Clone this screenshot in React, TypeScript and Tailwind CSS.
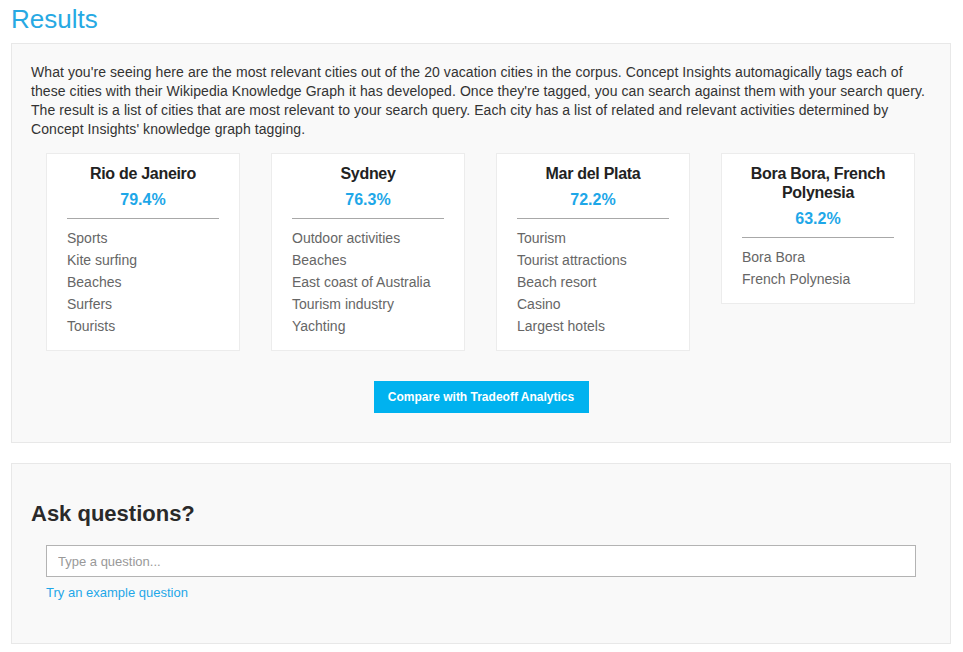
const cities = [
  { name: "Rio de Janeiro", score: "79.4%", tags: ["Sports", "Kite surfing", "Beaches", "Surfers", "Tourists"] },
  { name: "Sydney", score: "76.3%", tags: ["Outdoor activities", "Beaches", "East coast of Australia", "Tourism industry", "Yachting"] },
  { name: "Mar del Plata", score: "72.2%", tags: ["Tourism", "Tourist attractions", "Beach resort", "Casino", "Largest hotels"] },
  { name: "Bora Bora, French Polynesia", score: "63.2%", tags: ["Bora Bora", "French Polynesia"] },
];

function CityCard({ city }: { city: (typeof cities)[number] }) {
  return (
    <div className="w-[194px] self-start border border-[#ececec] bg-white px-5 pt-[10px] pb-[13px]">
      <div className="text-center text-[16px] font-bold leading-[19px] tracking-[-0.3px] text-[#222]">{city.name}</div>
      <div className="mt-[7px] text-center text-[16px] font-bold leading-[19px] text-[#1ea7e8]">{city.score}</div>
      <div className="mt-[9px] border-t border-[#a8a8a8]" />
      <ul className="mt-[8px]">
        {city.tags.map((t) => (
          <li key={t} className="text-[14px] leading-[22px] text-[#666]">
            {t}
          </li>
        ))}
      </ul>
    </div>
  );
}

export default function App() {
  return (
    <div className="min-h-screen bg-white pb-[8px] font-['Liberation_Sans',Arial,sans-serif]">
      <h1 className="ml-[11px] pt-[4px] text-[26px] font-normal leading-[30px] text-[#27a9e3]">Results</h1>

      {/* results panel */}
      <section className="mx-[11px] mt-[9px] w-[940px] border border-[#e8e8e8] bg-[#f9f9f9] px-[19px] pt-[19px] pb-[29px]">
        <p className="text-[14px] leading-[19px] tracking-[0.07px] text-[#333]">
          What you're seeing here are the most relevant cities out of the 20 vacation cities in the corpus. Concept Insights automagically tags each of
          <br />
          these cities with their Wikipedia Knowledge Graph it has developed. Once they're tagged, you can search against them with your search query.
          <br />
          The result is a list of cities that are most relevant to your search query. Each city has a list of related and relevant activities determined by
          <br />
          Concept Insights' knowledge graph tagging.
        </p>

        <div className="ml-[15px] mt-[14px] flex gap-[31px]">
          {cities.map((c) => (
            <CityCard key={c.name} city={c} />
          ))}
        </div>

        <div className="mt-[30px] flex justify-center">
          <button className="h-[32px] w-[215px] bg-[#00b2ef] text-[12px] font-bold text-white">
            Compare with Tradeoff Analytics
          </button>
        </div>
      </section>

      {/* questions panel */}
      <section className="mx-[11px] mt-[20px] w-[940px] border border-[#e8e8e8] bg-[#f9f9f9] px-[19px] pt-[37px] pb-[41px]">
        <h2 className="text-[22px] font-bold leading-[26px] text-[#2a2a2a]">Ask questions?</h2>
        <div className="ml-[15px] mr-[15px] mt-[18px]">
          <input
            type="text"
            placeholder="Type a question..."
            className="h-[32px] w-full border border-[#b3b3b3] bg-white px-[11px] text-[13px] text-[#333] outline-none placeholder:text-[#999]"
          />
          <a href="#" className="mt-[7px] block text-[13px] leading-[18px] text-[#1ea7e8]">
            Try an example question
          </a>
        </div>
      </section>
    </div>
  );
}
